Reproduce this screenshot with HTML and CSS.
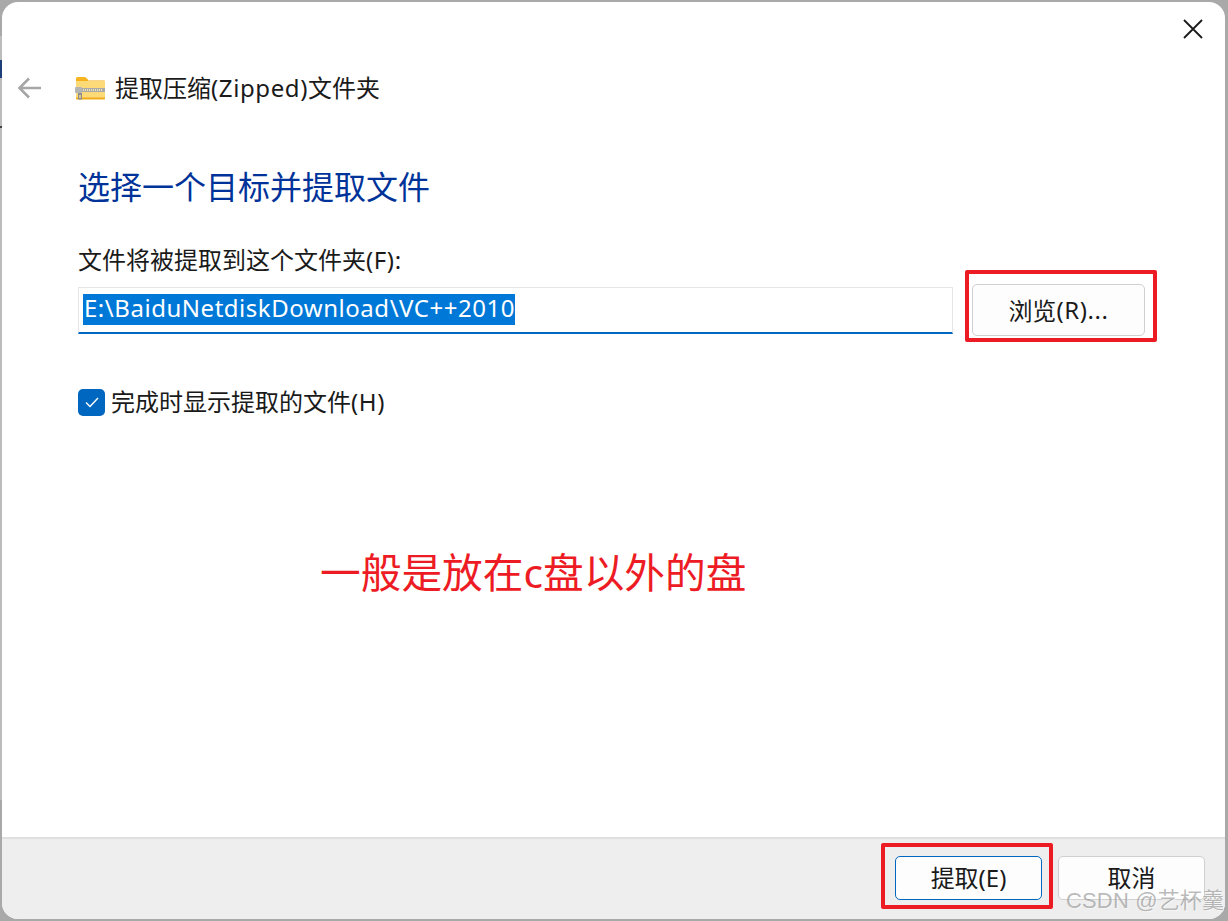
FILE: index.html
```html
<!DOCTYPE html>
<html lang="zh-CN">
<head>
<meta charset="utf-8">
<title>提取压缩(Zipped)文件夹</title>
<link rel="stylesheet" href="styles.css">
</head>
<body>
<div class="edge"></div>
<div class="edge-glyph"></div>
<div class="edge-tick"></div>
<div class="window">
  <div class="content">
    <div class="titlebar">
      <svg class="back" width="28" height="24" viewBox="0 0 28 24"><path d="M25 12H4M13 2.500 3.500 12 13 21.500" fill="none" stroke="#a6a6a6" stroke-width="2.600"/></svg>
      <svg class="folder" width="30" height="24" viewBox="0 0 30 24">
        <path d="M1 4V2.500Q1 1 2.500 1H10L13 3.500V5H1Z" fill="#f9b521"/>
        <rect x="1" y="4.500" width="29" height="19" rx="1" fill="#f2ab1c"/>
        <rect x="1" y="5" width="29" height="16.500" fill="#fdda78"/>
        <rect x="5" y="12" width="25" height="4" fill="#a9a9a9"/>
        <path d="M6 14H28" fill="none" stroke="#f1e3b4" stroke-width="2" stroke-dasharray="1 1"/>
        <rect x="0" y="11" width="7" height="6" rx="1" fill="#b4b4b4"/>
        <rect x="3" y="17" width="4" height="6.500" fill="#8f8f8f"/>
        <rect x="4" y="19" width="2" height="3" fill="#d8c68a"/>
      </svg>
      <span class="title">提取压缩<span class="latin">(Zipped)</span>文件夹</span>
      <svg class="close" width="20" height="20" viewBox="0 0 20 20"><path d="M1 1 19 19M19 1 1 19" fill="none" stroke="#1a1a1a" stroke-width="1.800"/></svg>
    </div>
    <h1 class="heading">选择一个目标并提取文件</h1>
    <div class="label">文件将被提取到这个文件夹<span class="latin">(F):</span></div>
    <div class="path-row">
      <div class="input"><span class="selected">E:\BaiduNetdiskDownload\VC++2010</span></div>
      <div class="button browse">浏览<span class="latin">(R)...</span></div>
    </div>
    <div class="check-row">
      <span class="checkbox"><svg width="16" height="14" viewBox="0 0 16 14"><path d="M2 7.500 6 11.500 14 3" fill="none" stroke="#fff" stroke-width="1.400"/></svg></span>
      <span class="check-text">完成时显示提取的文件<span class="latin">(H)</span></span>
    </div>
    <div class="note-row"><span class="note">一般是放在c盘以外的盘</span></div>
  </div>
  <div class="footer">
    <div class="button primary">提取(E)</div>
    <div class="button cancel">取消</div>
  </div>
</div>
<div class="mark mark-browse"></div>
<div class="mark mark-extract"></div>
<div class="watermark">CSDN @艺杯羹</div>
</body>
</html>
```
FILE: styles.css
```css
* { box-sizing: border-box; }
html, body { margin: 0; padding: 0; }
body {
  position: relative;
  width: 1228px;
  height: 921px;
  overflow: hidden;
  background: #a9a9a9;
  font-family: "Noto Sans", "Noto Sans CJK SC", sans-serif;
  color: #1a1a1a;
  font-size: 24px;
}
.edge { position: absolute; left: 0; top: 36px; width: 2px; height: 764px; background: #bcbcbc; }
.edge-glyph { position: absolute; left: 0; top: 60px; width: 2px; height: 18px; background: #1c3f7a; }
.edge-tick { position: absolute; left: 0; top: 126px; width: 2px; height: 2px; background: #444444; }
.window {
  position: relative;
  width: 1223px;
  height: 917px;
  margin: 2px 0 0 2px;
  background: #fff;
  border-radius: 16px;
  overflow: hidden;
  display: flex;
  flex-direction: column;
}
.content { flex: 1; padding: 0 22px 0 76px; display: flex; flex-direction: column; }
.titlebar { height: 118px; position: relative; display: flex; align-items: center; padding-top: 54px; }
.back { margin-left: -62px; margin-right: 31px; }
.folder { margin-right: 10px; }
.title { line-height: 32px; white-space: nowrap; }
.latin { letter-spacing: 0.6px; }
.close { position: absolute; right: 0; top: 17px; }
.heading { margin: 0; padding-top: 45px; font-size: 32px; font-weight: 400; line-height: 44px; color: #003399; }
.label { margin-top: 35px; line-height: 32px; }
.path-row { margin-top: 11px; display: flex; gap: 19px; }
.input {
  width: 875px;
  height: 47px;
  padding: 3px 0 0 4px;
  border: 1px solid #e6e6e6;
  border-bottom: 2px solid #0067c0;
}
.selected { display: inline-block; height: 31px; line-height: 28px; padding: 0 0 0 1px; background: #0078d7; color: #fff; white-space: nowrap; letter-spacing: 0.53px; }
.button {
  display: flex;
  align-items: center;
  justify-content: center;
  background: #fdfdfd;
  border: 1px solid #d0d0d0;
  border-radius: 5px;
}
.browse { width: 173px; height: 52px; margin-top: -3px; padding-bottom: 2px; }
.check-row { margin-top: 50px; display: flex; align-items: center; gap: 6px; }
.checkbox {
  width: 27px;
  height: 27px;
  border-radius: 5px;
  background: #0067c0;
  display: flex;
  align-items: center;
  justify-content: center;
}
.check-text { line-height: 32px; }
.note-row { margin-top: 126px; padding-left: 242px; }
.note { font-size: 40.7px; line-height: 56px; color: #ed1c24; }
.footer {
  height: 82px;
  background: #eeeeee;
  border-top: 2px solid #dfdfdf;
  display: flex;
  justify-content: flex-end;
  gap: 16px;
  padding: 17px 20px 0 0;
}
.footer .button { width: 147px; height: 44px; padding-bottom: 3px; }
.primary { border-color: #0067c0 !important; }
.mark { position: absolute; border: 4px solid #ed1c24; border-radius: 2px; }
.mark-browse { left: 965px; top: 270px; width: 192px; height: 72px; }
.mark-extract { left: 881px; top: 843px; width: 172px; height: 66px; }
.watermark { position: absolute; left: 1066px; top: 886px; font-size: 22px; line-height: 30px; letter-spacing: 0.15px; color: rgba(130,130,130,0.55); text-shadow: 1px 1px 0 rgba(255,255,255,0.5); white-space: nowrap; font-family: "Liberation Sans", "Noto Sans CJK SC", sans-serif; }
```
